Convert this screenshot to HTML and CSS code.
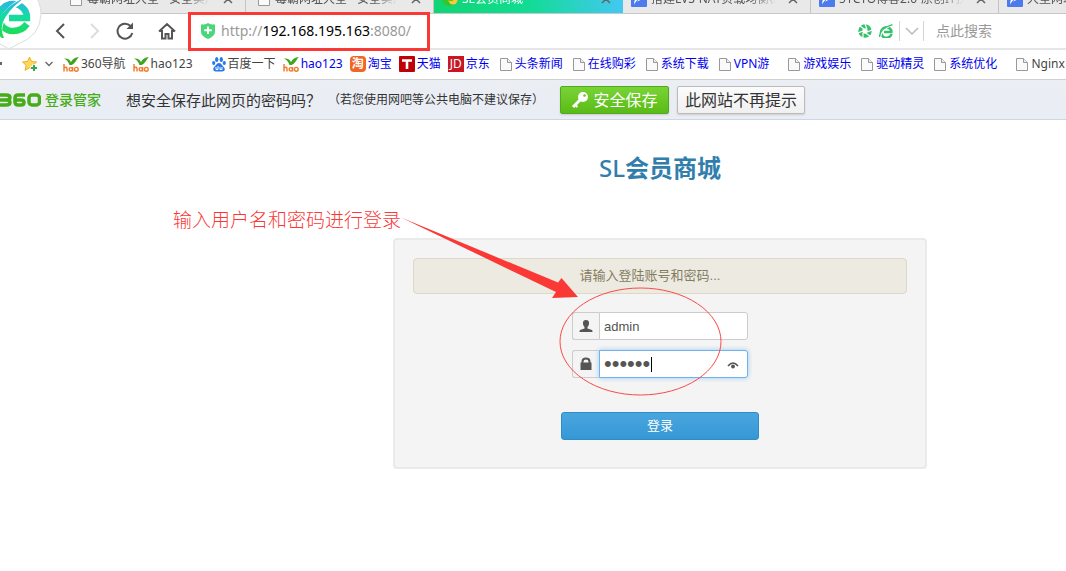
FILE: index.html
```html
<!DOCTYPE html>
<html lang="zh-CN">
<head>
<meta charset="utf-8">
<title>SL会员商城</title>
<link rel="stylesheet" href="styles.css">
</head>
<body>
<svg class="defs" width="0" height="0" aria-hidden="true">
  <defs>
    <linearGradient id="brand" gradientUnits="userSpaceOnUse" x1="0" y1="0" x2="0" y2="34"><stop offset="0" stop-color="#2cb4e8"/><stop offset=".5" stop-color="#14dca0"/><stop offset="1" stop-color="#1fdc55"/></linearGradient>
    <symbol id="page" viewBox="0 0 12 14"><path d="M.5 1.5h7l4 4v8H.5z" fill="#fafafa" stroke="#999"/><path d="M7.500 1.500v4h4" fill="#eee" stroke="#999"/></symbol>
    <symbol id="close" viewBox="0 0 10 10"><path d="M1 1l8 8M9 1l-8 8" stroke="#666" stroke-width="1.500"/></symbol>
    <symbol id="pen" viewBox="0 0 16 16"><rect width="16" height="16" rx="1" fill="#4b7bec"/><path d="M3 14C3 8 6 3 12 0c2 4 0 9-7 11z" fill="#fff"/><path d="M3 14l6-8" stroke="#4b7bec"/></symbol>
    <symbol id="sprout" viewBox="0 0 16 16"><path d="M6.500 9C5 5 3.500 3.500 1 2.500 5 2 7 4 8 6c1.500-3 4-4.500 8-5-2.500 2-3 6-7.500 8z" fill="#3ea51c"/><g fill="none" stroke="#f07a28" stroke-width="1.400"><path d="M1 8v7.500M1 12q3-2 3 1v2.500"/><circle cx="7.800" cy="13.300" r="1.700"/><path d="M9.600 11v4.500"/><circle cx="13.300" cy="13.300" r="1.900"/></g></symbol>
  </defs>
</svg>

<header class="browser">
  <nav class="tabs">
    <div class="tab"><svg class="i12"><use href="#page"/></svg><span class="tab-name">毒霸网址大全 - 安全实用的网址</span><svg class="i10"><use href="#close"/></svg></div>
    <div class="tab"><svg class="i12"><use href="#page"/></svg><span class="tab-name">毒霸网址大全 - 安全实用的网址</span><svg class="i10"><use href="#close"/></svg></div>
    <div class="tab tab-active"><svg class="i16" viewBox="0 0 16 16"><circle cx="7" cy="8" r="7" fill="#35c52c"/><circle cx="11" cy="9" r="4.500" fill="#f8c934"/><circle cx="9" cy="7" r="3" fill="#35c52c"/></svg><span class="tab-name">SL会员商城</span><svg class="i10"><use href="#close"/></svg></div>
    <div class="tab"><svg class="i16"><use href="#pen"/></svg><span class="tab-name">搭建LVS-NAT负载均衡群集</span><svg class="i10"><use href="#close"/></svg></div>
    <div class="tab"><svg class="i16"><use href="#pen"/></svg><span class="tab-name">51CTO博客2.0-原创IT技术文章</span><svg class="i10"><use href="#close"/></svg></div>
    <div class="tab"><svg class="i16"><use href="#pen"/></svg><span class="tab-name">大型网站架构</span></div>
  </nav>

  <div class="toolbar">
    <button class="tool" aria-label="后退"><svg width="20" height="20" viewBox="0 0 20 20"><path d="M13 3L6 10l7 7" fill="none" stroke="#555" stroke-width="2"/></svg></button>
    <button class="tool" aria-label="前进"><svg width="20" height="20" viewBox="0 0 20 20"><path d="M8 3l7 7-7 7" fill="none" stroke="#ddd" stroke-width="2"/></svg></button>
    <button class="tool" aria-label="刷新"><svg width="20" height="20" viewBox="0 0 20 20"><path d="M15.500 5A7.500 7.500 0 1 0 17.300 12" fill="none" stroke="#555" stroke-width="2"/><path d="M18 1.500V8h-6.500z" fill="#555"/></svg></button>
    <button class="tool tool-home" aria-label="主页"><svg width="20" height="20" viewBox="0 0 20 20"><path d="M2 10.500L10 3l8 7.500M5 9v8.500h3.500V13h3v4.500H15V9" fill="none" stroke="#555" stroke-width="2"/></svg></button>
    <div class="address">
      <svg width="14" height="16" viewBox="0 0 14 16"><path d="M0 1.500Q4 2 7 0q3 2 7 1.500V9q0 4-7 7-7-3-7-7z" fill="#4cd67b"/><path d="M7 3.500v7.500M3.200 7.200h7.600" stroke="#fff" stroke-width="2"/></svg>
      <span class="url">http://<b>192.168.195.163</b>:8080/</span>
      <span class="mark-box"></span>
    </div>
    <div class="speed">
      <svg width="14" height="14" viewBox="0 0 14 14"><circle cx="7" cy="7" r="4.700" fill="none" stroke="#35c06a" stroke-width="4"/><path d="M7 0l2 5M14 6L9 8M12 12L7.500 9M5 14V9M0 9l5-2M2 2l4 3" stroke="#fff" stroke-width="1.200"/></svg>
      <svg width="14" height="14" viewBox="0 0 14 14"><path d="M12.500 10A5.300 5.300 0 1 1 12.300 6.500V8H5" fill="none" stroke="#35c06a" stroke-width="2.600"/><path d="M1 13.500Q2 5 13 .8" fill="none" stroke="#fff" stroke-width="2"/><path d="M.5 13Q1 4 13.500.7" fill="none" stroke="#35c06a" stroke-width="1.300"/></svg>
    </div>
    <button class="drop" aria-label="展开"><svg width="14" height="8" viewBox="0 0 14 8"><path d="M1 1l6 6 6-6" fill="none" stroke="#bbb" stroke-width="1.500"/></svg></button>
    <input class="search" type="text" placeholder="点此搜索" aria-label="搜索">
  </div>
  <svg class="logo" width="44" height="50" viewBox="0 0 44 50"><path d="M-25 13A33 33 0 0 1 41 15Q40 36 18 44L9 49 0 44Q-20 38-25 13z" fill="#fff" stroke="#ddd"/><path d="M27 24Q22 31 13 31A14 13.500 0 1 1 27 18H9" fill="none" stroke="url(#brand)" stroke-width="6.500"/><path d="M0 37Q-4 14 26-2" fill="none" stroke="#fff" stroke-width="5"/><path d="M2 38Q-8 30-2 20 6 6 24-2 8 10 3 22 0 30 4 38z" fill="url(#brand)"/></svg>

  <nav class="bookmarks">
    <span class="edge"></span>
    <svg class="star" width="16" height="16" viewBox="0 0 16 16"><path d="M7.500 1l2 4.500 5 .5-3.700 3.300 1 5-4.300-2.500-4.400 2.500 1-5L.5 6l5-.5z" fill="#ffd75a" stroke="#edac2a"/><path d="M12 8.500v7M8.500 12h7" stroke="#fff" stroke-width="4"/><path d="M12 9v6M9 12h6" stroke="#2cac55" stroke-width="2"/></svg>
    <svg class="more" width="8" height="6" viewBox="0 0 8 6"><path d="M.5 1L4 4.500 7.500 1" fill="none" stroke="#666" stroke-width="1.300"/></svg>
    <a class="bm plain" href="#"><svg class="i16"><use href="#sprout"/></svg>360导航</a>
    <a class="bm plain" href="#"><svg class="i16"><use href="#sprout"/></svg>hao123</a>
    <a class="bm plain apart" href="#"><svg class="i14" viewBox="0 0 14 16"><g fill="#2878e8"><ellipse cx="4.700" cy="3.500" rx="1.700" ry="2.500"/><ellipse cx="9.300" cy="3.500" rx="1.700" ry="2.500"/><ellipse cx="1.700" cy="7" rx="1.600" ry="2"/><ellipse cx="12.300" cy="7" rx="1.600" ry="2"/><path d="M7 7q2 0 3 2l2.500 3q1 3-2 3.500H3.500q-3-.5-2-3.500L4 9q1-2 3-2z"/></g><path d="M4 11v2.500h2V10M8 11v2.500h2V11" fill="none" stroke="#fff"/></svg>百度一下</a>
    <a class="bm" href="#"><svg class="i16"><use href="#sprout"/></svg>hao123</a>
    <a class="bm" href="#"><span class="badge taobao">淘</span>淘宝</a>
    <a class="bm" href="#"><svg class="i16" viewBox="0 0 16 16"><rect width="16" height="16" rx="1" fill="#be0008"/><path d="M3 4.500h10M8 4v9" stroke="#fff" stroke-width="2.600"/></svg>天猫</a>
    <a class="bm" href="#"><span class="badge jd">JD</span>京东</a>
    <a class="bm doc" href="#"><svg class="i12"><use href="#page"/></svg>头条新闻</a>
    <a class="bm doc" href="#"><svg class="i12"><use href="#page"/></svg>在线购彩</a>
    <a class="bm doc" href="#"><svg class="i12"><use href="#page"/></svg>系统下载</a>
    <a class="bm doc" href="#"><svg class="i12"><use href="#page"/></svg>VPN游</a>
    <a class="bm doc apart" href="#"><svg class="i12"><use href="#page"/></svg>游戏娱乐</a>
    <a class="bm doc" href="#"><svg class="i12"><use href="#page"/></svg>驱动精灵</a>
    <a class="bm doc" href="#"><svg class="i12"><use href="#page"/></svg>系统优化</a>
    <a class="bm doc plain apart" href="#"><svg class="i12"><use href="#page"/></svg>Nginx</a>
  </nav>

  <div class="savebar">
    <svg class="brand360" width="41" height="14" viewBox="0 0 41 14"><g fill="none" stroke="#46ac18" stroke-width="3.500"><path d="M-3 2H6q4 0 4 2.500T6 7H-1M6 7q4 0 4 2.500T6 12H-3"/><path d="M25 2h-7q-3 0-3 3v4q0 3 3 3h3q3 0 3-2.500T21 7h-5"/><rect x="29" y="2" width="10.500" height="10" rx="3"/></g></svg>
    <strong class="keeper">登录管家</strong>
    <span class="ask">想安全保存此网页的密码吗？</span>
    <span class="hint">（若您使用网吧等公共电脑不建议保存）</span>
    <button class="btn save"><svg width="18" height="18" viewBox="0 0 18 18"><path d="M2 16L10 8" stroke="#fff" stroke-width="3"/><path d="M4 14l2.500 2" stroke="#fff" stroke-width="2"/><circle cx="12" cy="6" r="5" fill="#fff"/><circle cx="13.500" cy="4.500" r="1.300" fill="#69c526"/></svg>安全保存</button>
    <button class="btn never">此网站不再提示</button>
  </div>
</header>

<main class="site">
  <h1 class="title"><span class="latin">SL</span>会员商城</h1>
  <form class="panel">
    <p class="alert">请输入登陆账号和密码...</p>
    <div class="field">
      <label class="addon" for="user" title="用户名"><svg width="14" height="14" viewBox="0 0 14 14"><path d="M7 1q3.500 0 3 4-.3 2-1.500 3v1.500L13 11q.5.500.5 2H.5q0-1.500.5-2l4.500-1.500V8Q4.300 7 4 5 3.500 1 7 1z" fill="#555"/></svg></label>
      <input class="entry" id="user" type="text" value="admin">
    </div>
    <div class="field">
      <label class="addon" for="pass" title="密码"><svg width="14" height="14" viewBox="0 0 14 14"><path d="M3.500 6V4.500Q3.500 1.500 7 1.500t3.500 3V6" fill="none" stroke="#555" stroke-width="2"/><path d="M1.500 5.500h11V13h-11z" fill="#555"/></svg></label>
      <input class="entry secret" id="pass" type="password" value="secret">
      <span class="caret"></span>
      <svg class="eye" width="12" height="8" viewBox="0 0 12 8"><path d="M1 5q5-6 10 0" fill="none" stroke="#555" stroke-width="1.600"/><circle cx="6" cy="5.500" r="1.900" fill="#555"/></svg>
    </div>
    <button class="login" type="button">登录</button>
    <svg class="marks" width="330" height="185" viewBox="398 213 330 185"><path d="M401 217.500L558 282.500l3.500-4.500L578 297l-26 1 4-6z" fill="#fa3937"/><ellipse cx="640.500" cy="341.500" rx="80.500" ry="53.500" fill="none" stroke="#fa4a48"/></svg>
    <span class="note">输入用户名和密码进行登录</span>
  </form>
</main>
</body>
</html>
```

FILE: styles.css
```css
* { box-sizing: border-box; }
body {
  margin: 0;
  background: #fff;
  color: #333;
  font: 12px/18px "Noto Sans", "Noto Sans CJK SC", sans-serif;
  overflow-x: hidden;
}
button, input { font: inherit; color: inherit; margin: 0; }
svg { flex: none; display: block; }
.defs { position: absolute; }
.i10 { width: 10px; height: 10px; }
.i12 { width: 12px; height: 14px; }
.i14 { width: 14px; height: 16px; }
.i16 { width: 16px; height: 16px; }

.browser { position: relative; overflow: hidden; white-space: nowrap; }
.logo { position: absolute; left: 0; top: 0; }

.tabs {
  display: flex;
  height: 14px;
  padding-left: 58px;
  overflow: hidden;
  background: #e9e9e9;
  border-bottom: 1px solid #c8c8c8;
}
.tab {
  display: flex;
  flex: none;
  align-items: center;
  gap: 5px;
  width: 188px;
  height: 28px;
  margin-top: -15px;
  padding: 0 12px;
  border-right: 1px solid #c4c4c4;
  color: #555;
}
.tab:has(.i16) { gap: 4px; padding-left: 8px; }
.tab-name {
  flex: 1;
  overflow: hidden;
  margin-right: 8px;
  mask-image: linear-gradient(90deg, #000 80%, transparent);
}
.tab-active {
  width: 189px;
  border: 0;
  color: #fff;
  background: linear-gradient(90deg, #0fd573, #12dc94 50%, #43c8f4);
}

.toolbar {
  display: flex;
  align-items: center;
  height: 36px;
  padding-left: 51px;
  border-bottom: 2px solid #e6e6e6;
}
.tool {
  display: flex;
  margin-right: 12px;
  padding: 0;
  border: 0;
  background: none;
}
.tool-home { margin-left: 10px; margin-right: 13px; }
.address {
  position: relative;
  display: flex;
  flex: 1;
  align-items: center;
  gap: 6px;
  padding-left: 11px;
}
.url { font-size: 14px; line-height: 20px; color: #999; }
.url b { font-weight: 400; color: #000; }
.mark-box {
  position: absolute;
  left: -2px;
  top: -9px;
  width: 242px;
  height: 39px;
  border: 3px solid #fa3937;
}
.speed { display: flex; gap: 7px; margin-right: 6px; }
.drop {
  display: flex;
  align-items: center;
  justify-content: center;
  width: 25px;
  height: 20px;
  padding: 0;
  border: solid #d5d5d5;
  border-width: 0 1px;
  background: none;
}
.search {
  width: 142px;
  padding: 0 12px;
  border: 0;
  outline: 0;
  font-size: 14px;
}
.search::placeholder { color: #999; }

.bookmarks {
  display: flex;
  align-items: center;
  height: 30px;
  padding-bottom: 2px;
  border-bottom: 1px solid #d0d0d0;
}
.edge { flex: none; width: 2px; height: 3px; background: #666; }
.star { margin-left: 20px; }
.more { margin: 0 3px 0 7px; }
.bm {
  display: flex;
  flex: none;
  align-items: center;
  gap: 2px;
  margin-left: 7px;
  color: #0000f0;
  text-decoration: none;
}
.doc { gap: 3px; margin-left: 10px; }
.plain { color: #444; }
.apart { margin-left: 19px; }
.badge {
  width: 16px;
  height: 16px;
  color: #fff;
  font-size: 12px;
  line-height: 16px;
  text-align: center;
}
.taobao { border-radius: 4px; background: #f26522; font-weight: 700; }
.jd { background: #c81623; }

.savebar {
  display: flex;
  align-items: center;
  height: 40px;
  background: linear-gradient(#ebeff4, #e9edf4);
  border-bottom: 1px solid #cfd5e2;
}
.keeper { margin: 0 25px 0 4px; font-size: 14px; font-weight: 500; color: #46ac18; }
.ask { width: 202px; font-size: 15px; }
.hint { width: 232px; }
.btn {
  display: flex;
  align-items: center;
  justify-content: center;
  height: 28px;
  padding: 0 7px;
  border: 1px solid #bbb;
  border-radius: 2px;
  background: linear-gradient(#fbfbfb, #f0f0f0);
  box-shadow: 0 1px 2px #ccc;
  font-size: 16px;
}
.save {
  gap: 4px;
  width: 109px;
  margin-right: 8px;
  border-color: #52a822;
  background: linear-gradient(#78d435, #5abb17);
  color: #fff;
}

.site {
  display: flex;
  flex-direction: column;
  align-items: center;
  padding: 28px 0 40px 254px;
}
.title { margin: 0 0 50px; font-size: 24px; line-height: 40px; color: #317eac; }
.latin { font-weight: 500; }
.panel {
  position: relative;
  display: flex;
  flex-direction: column;
  align-items: center;
  width: 534px;
  padding: 18px 18px 27px;
  border: 2px solid #eaeaea;
  border-radius: 4px;
  background: #f4f4f4;
  font: 13px/18px "Liberation Sans", "Noto Sans CJK SC", sans-serif;
}
.alert {
  align-self: stretch;
  margin: 0 0 18px;
  padding: 8px 34px 8px 14px;
  border: 1px solid #ddd9c6;
  border-radius: 4px;
  background: #eceae1;
  color: #847c60;
  text-align: center;
}
.field { position: relative; display: flex; width: 176px; margin-bottom: 10px; }
.addon {
  display: flex;
  align-items: center;
  justify-content: center;
  width: 27px;
  border: 1px solid #ccc;
  border-right: 0;
  border-radius: 3px 0 0 3px;
}
.entry {
  flex: 1;
  min-width: 0;
  height: 28px;
  padding: 0 4px;
  border: 1px solid #ccc;
  border-radius: 0 3px 3px 0;
  outline: 0;
  background: #fff;
  color: #555;
}
.secret {
  border-color: #6fb3ea;
  box-shadow: 0 0 5px #9bcaf0;
  font-size: 22px;
}
.caret { position: absolute; left: 79px; top: 7px; width: 1px; height: 15px; background: #000; }
.eye { position: absolute; right: 9px; top: 11px; }
.login {
  width: 198px;
  height: 28px;
  margin-top: 24px;
  padding: 0;
  border: 1px solid #2f8cc8;
  border-radius: 3px;
  background: linear-gradient(#4aa5de, #3598d6);
  color: #fff;
}
.marks { position: absolute; left: 3px; top: -27px; pointer-events: none; }
.note {
  position: absolute;
  right: 524px;
  top: -33px;
  font-size: 19px;
  line-height: 28px;
  font-weight: 300;
  color: #fa3937;
  white-space: nowrap;
}
```
